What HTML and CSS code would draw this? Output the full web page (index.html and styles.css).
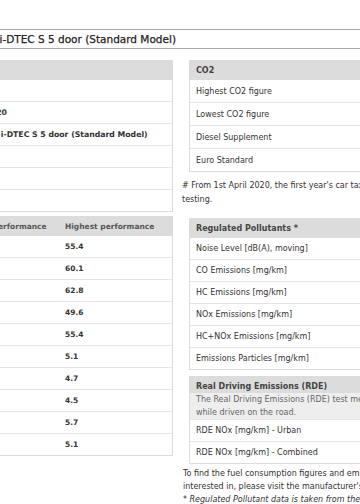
FILE: index.html
```html
<!DOCTYPE html>
<html>
<head>
<meta charset="utf-8">
<link rel="stylesheet" href="styles.css">
</head>
<body>
<div class="viewport">
  <div class="page">
    <h1 class="title"><span class="title-text">Honda Civic 1.6 i-DTEC S 5 door (Standard Model)</span></h1>
    <div class="columns">
      <div class="col col-left">
        <div class="panel">
          <div class="panel-head">Vehicle Details</div>
          <div class="row"><span class="lbl">Manufacturer</span><span class="val">Honda</span></div>
          <div class="row"><span class="lbl">Model year</span><span class="val">2019/2020</span></div>
          <div class="row"><span class="lbl">Model</span><span class="val">Civic 1.6 i-DTEC S 5 door (Standard Model)</span></div>
          <div class="row"><span class="lbl">Transmission</span><span class="val">M6</span></div>
          <div class="row"><span class="lbl">Fuel type</span><span class="val">Diesel</span></div>
          <div class="row"><span class="lbl">Engine</span><span class="val">1597</span></div>
        </div>

        <div class="panel">
          <div class="panel-head perf">
            <span class="c1">WLTP</span><span class="c2">Lowest performance</span><span class="c3">Highest performance</span>
          </div>
          <div class="row perf"><span class="c1">Low</span><span class="c2">52.3</span><span class="c3">55.4</span></div>
          <div class="row perf"><span class="c1">Medium</span><span class="c2">57.6</span><span class="c3">60.1</span></div>
          <div class="row perf"><span class="c1">High</span><span class="c2">60.1</span><span class="c3">62.8</span></div>
          <div class="row perf"><span class="c1">Extra High</span><span class="c2">47.1</span><span class="c3">49.6</span></div>
          <div class="row perf"><span class="c1">Combined</span><span class="c2">52.3</span><span class="c3">55.4</span></div>
          <div class="row perf"><span class="c1">Low</span><span class="c2">5.4</span><span class="c3">5.1</span></div>
          <div class="row perf"><span class="c1">Medium</span><span class="c2">4.9</span><span class="c3">4.7</span></div>
          <div class="row perf"><span class="c1">High</span><span class="c2">4.7</span><span class="c3">4.5</span></div>
          <div class="row perf"><span class="c1">Extra High</span><span class="c2">6.0</span><span class="c3">5.7</span></div>
          <div class="row perf"><span class="c1">Combined</span><span class="c2">5.4</span><span class="c3">5.1</span></div>
        </div>
      </div>

      <div class="col col-right">
        <div class="panel">
          <div class="panel-head">CO2</div>
          <div class="row tall">Highest CO2 figure</div>
          <div class="row tall">Lowest CO2 figure</div>
          <div class="row tall">Diesel Supplement</div>
          <div class="row tall">Euro Standard</div>
        </div>
        <p class="note"># From 1st April 2020, the first year's car tax rate for diesel cars is based on RDE2 testing.</p>

        <div class="panel">
          <div class="panel-head">Regulated Pollutants *</div>
          <div class="row">Noise Level [dB(A), moving]</div>
          <div class="row">CO Emissions [mg/km]</div>
          <div class="row">HC Emissions [mg/km]</div>
          <div class="row">NOx Emissions [mg/km]</div>
          <div class="row">HC+NOx Emissions [mg/km]</div>
          <div class="row">Emissions Particles [mg/km]</div>
        </div>

        <div class="panel rde">
          <div class="panel-head rde-head">Real Driving Emissions (RDE)</div>
          <div class="panel-desc">The Real Driving Emissions (RDE) test measures the pollutants emitted by a car while driven on the road.</div>
          <div class="row">RDE NOx [mg/km] - Urban</div>
          <div class="row">RDE NOx [mg/km] - Combined</div>
        </div>

        <p class="foot">To find the fuel consumption figures and emissions data for the car you are interested in, please visit the manufacturer's website.</p>
        <p class="foot italic">* Regulated Pollutant data is taken from the manufacturer's type approval.</p>
      </div>
    </div>
  </div>
</div>
</body>
</html>
```

FILE: styles.css
```css
html, body {
  margin: 0;
  padding: 0;
  background: #fff;
}
body {
  font-family: "DejaVu Sans", Verdana, sans-serif;
  font-size: 8px;
  color: #333;
  overflow: hidden;
}
.viewport {
  width: 360px;
  height: 504px;
  overflow: hidden;
}
.page {
  width: 720px;
  margin-left: -170px;
  padding-top: 29px;
}
.title {
  margin: 0 0 11px 0;
  border-top: 1px solid #a9a9a9;
  border-bottom: 1px solid #a9a9a9;
  height: 18px;
  display: flex;
  align-items: center;
  justify-content: flex-end;
  width: 346px;
  font-size: 10.5px;
  font-weight: normal;
  color: #222;
  white-space: nowrap;
  position: relative;
  -webkit-text-stroke: 0.25px #222;
}
.title::after {
  content: "";
  display: block;
  position: absolute;
  left: 100%;
  top: -1px;
  bottom: -1px;
  width: 400px;
  border-top: 1px solid #a9a9a9;
  border-bottom: 1px solid #a9a9a9;
}
.columns {
  display: flex;
  align-items: flex-start;
  gap: 9px;
}
.col-left {
  width: 343px;
  display: flex;
  flex-direction: column;
  gap: 4px;
}
.col-right {
  width: 360px;
}
.panel {
  border: 1px solid #dcdcdc;
  background: #fff;
}
.col-right .panel {
  margin-left: 7px;
}
.panel-head {
  height: 19px;
  background: #dcdcdc;
  display: flex;
  align-items: center;
  padding-left: 6px;
  font-weight: bold;
  color: #444;
  white-space: nowrap;
}
.row {
  height: 21px;
  display: flex;
  align-items: center;
  padding-left: 6px;
  white-space: nowrap;
  border-top: 1px solid #e6e6e6;
}
.panel-head + .row {
  border-top: 0;
}
.row.tall {
  height: 22px;
}
.lbl {
  width: 124px;
  flex: none;
}
.val {
  font-weight: bold;
  font-size: 7.75px;
}
.perf .c1 {
  width: 123px;
  flex: none;
}
.perf .c2 {
  width: 105px;
  flex: none;
}
.perf .c3 {
  flex: none;
}
.perf .c2,
.perf .c3 {
  font-size: 7.5px;
}
.row.perf .c2,
.row.perf .c3 {
  font-weight: bold;
}
.panel-head.perf {
  color: #555;
}
.note {
  margin: 7px 0 11px 0;
  line-height: 14px;
  width: 340px;
}
.rde {
  margin-top: 6px;
}
.rde-head {
  height: 16px;
  align-items: flex-start;
  padding-top: 5px;
  line-height: 10px;
  box-sizing: border-box;
}
.panel-desc {
  background: #eeeeee;
  color: #666;
  padding: 0 6px;
  line-height: 13px;
  width: 330px;
}
.foot {
  margin: 3px 0 0 1px;
  line-height: 13px;
  width: 335px;
}
.foot + .foot {
  margin-top: 0;
}
.italic {
  font-style: italic;
  white-space: nowrap;
}
```
